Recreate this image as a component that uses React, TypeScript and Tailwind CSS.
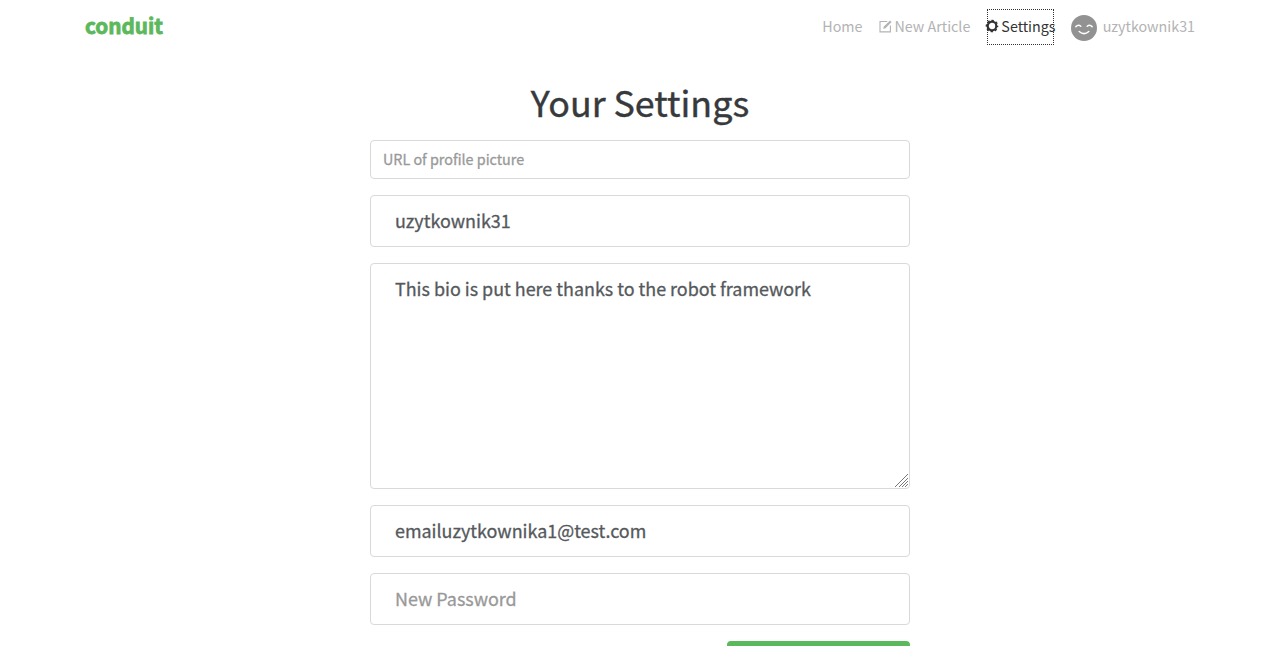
import React from "react";

const field =
  "block w-full rounded border border-[#d9d9d9] bg-white text-[#55595c] outline-none placeholder:text-[#999999] placeholder:opacity-100 [-webkit-text-stroke:0.3px]";
const large = "h-[52px] px-6 pb-0.5 text-[17.92px] leading-[27px]";

function ComposeIcon() {
  return (
    <svg viewBox="0 0 13 13" className="h-[13px] w-[13px]" fill="none" stroke="currentColor" strokeWidth="1.1">
      <path d="M8.2 1.5H1v10.4h10.4V5.4" />
      <path d="M4.2 8.9l.7-2.4L11 .4l1.6 1.6-6.1 6.2z" fill="currentColor" stroke="none" />
    </svg>
  );
}

function GearIcon() {
  return (
    <svg viewBox="0 0 12 12" className="h-3 w-3 overflow-visible" fill="none" stroke="currentColor">
      <circle cx="6" cy="6" r="4.3" strokeWidth="2.2" />
      <circle cx="6" cy="6" r="5.6" strokeWidth="1.4" strokeDasharray="2.4 1.998" strokeDashoffset="1.2" />
    </svg>
  );
}

function Avatar() {
  return (
    <svg viewBox="0 0 26 26" className="mt-0.5 h-[26px] w-[26px]" fill="none">
      <circle cx="13" cy="13" r="13" fill="#929292" />
      <g stroke="#fff" strokeWidth="1.5" strokeLinecap="round">
        <path d="M4.9 11.6q2.4-2.4 4.9-.3M16.2 11.3q2.5-2.1 4.9.3" />
        <path d="M8.2 16.5q4.8 4.2 9.6 0" />
      </g>
    </svg>
  );
}

export default function App() {
  return (
    <div className="h-[646px] overflow-hidden bg-white font-['Noto_Sans_CJK_SC',sans-serif] text-[#373a3c]">
      <nav className="mx-auto flex h-[54px] w-[1110px] items-center justify-between text-[14.3px] leading-6">
        <a className="pb-1 text-[20.7px] font-bold leading-6 text-[#5cb85c] [-webkit-text-stroke:0.8px]">conduit</a>
        <div className="flex items-center text-[#b3b3b3]">
          <a className="pb-0.5">Home</a>
          <a className="ml-4 flex items-center gap-[3px] pb-0.5">
            <ComposeIcon />
            New Article
          </a>
          <a className="ml-[17px] flex h-9 w-[67px] items-center gap-[3px] border border-dotted border-[#333333] pb-0.5 whitespace-nowrap text-[#333333]">
            <span className="-ml-0.5">
              <GearIcon />
            </span>
            Settings
          </a>
          <a className="ml-[17px] flex items-center gap-[5.3px]">
            <Avatar />
            <span className="pb-0.5">uzytkownik31</span>
          </a>
        </div>
      </nav>
      <main className="mx-auto w-[540px] pt-[25px]">
        <h1 className="mb-2 h-[53px] text-center text-[35.8px] leading-[44px] [-webkit-text-stroke:0.4px]">
          Your Settings
        </h1>
        <form className="flex flex-col gap-4">
          <input className={`${field} h-[39px] px-3 pb-0.5 text-[14.33px]`} placeholder="URL of profile picture" />
          <input className={`${field} ${large}`} defaultValue="uzytkownik31" />
          <div className="relative">
            <textarea
              className={`${field} h-[226px] resize-none px-6 py-[11px] text-[17.92px] leading-[27px]`}
              defaultValue="This bio is put here thanks to the robot framework"
            />
            <svg
              viewBox="0 0 13 13"
              className="absolute right-0.5 bottom-0.5 h-[13px] w-[13px]"
              stroke="#777"
              strokeWidth="1"
            >
              <path d="M0 13L13 0M4 13l9-9M7 13l6-6M10 13l3-3" />
            </svg>
          </div>
          <input className={`${field} ${large}`} defaultValue="emailuzytkownika1@test.com" />
          <input className={`${field} ${large}`} placeholder="New Password" />
          <button type="button" className="h-[51px] w-[183px] self-end rounded bg-[#5cb85c]" />
        </form>
      </main>
    </div>
  );
}
